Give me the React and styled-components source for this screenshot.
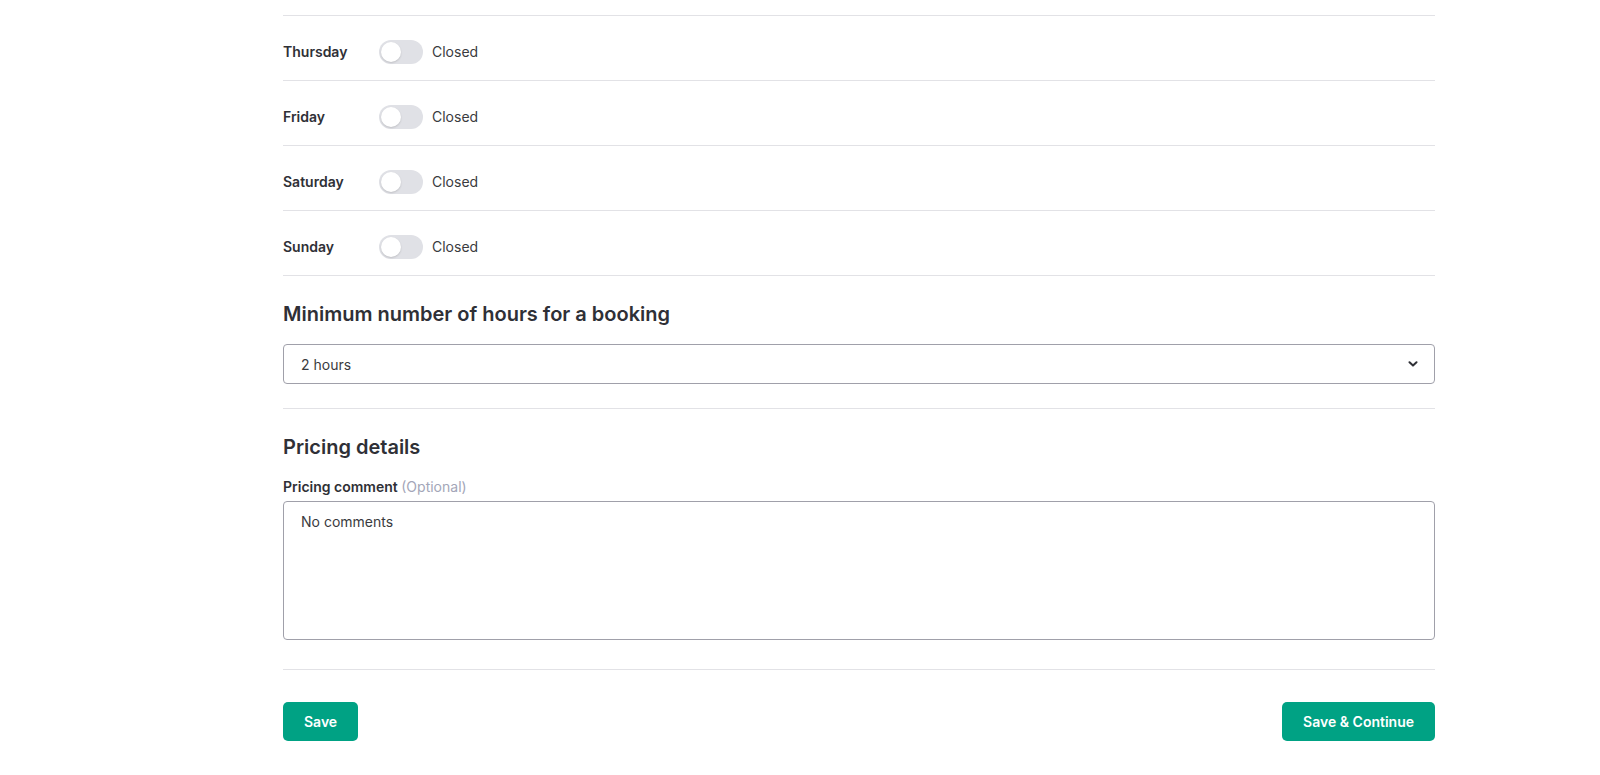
import React from 'react'
import styled, { createGlobalStyle } from 'styled-components'

const GlobalStyle = createGlobalStyle`
  body {
    margin: 0;
    background: #ffffff;
    font-family: Inter, "Noto Sans", "Liberation Sans", sans-serif;
    color: #2f3036;
  }
`

const Page = styled.div`
  padding: 15px 0 40px 283px;
`

const Form = styled.div`
  width: 1152px;
`

const DayRow = styled.div`
  display: flex;
  align-items: center;
  border-top: 1px solid #e2e2e6;
  padding: 24px 0 16px;
`

const DayLabel = styled.div`
  width: 96px;
  font-size: 14px;
  font-weight: 600;
  line-height: 20px;
  color: #2f3036;
`

const Track = styled.span`
  position: relative;
  display: inline-block;
  width: 44px;
  height: 24px;
  border-radius: 12px;
  background: ${(props) => (props.on ? '#00a284' : '#e0e1e6')};

  &:after {
    content: '';
    position: absolute;
    top: 2px;
    left: ${(props) => (props.on ? '22px' : '2px')};
    width: 20px;
    height: 20px;
    border-radius: 50%;
    background: #ffffff;
    box-shadow: 0 1px 2px rgba(0, 0, 0, 0.15);
  }
`

const ToggleText = styled.span`
  margin-left: 9px;
  font-size: 14px;
  line-height: 20px;
  color: #3a3b40;
`

const Section = styled.div`
  border-top: 1px solid #e2e2e6;
  padding-top: 24px;
`

const Heading = styled.h2`
  margin: 0;
  font-size: 20px;
  font-weight: 600;
  line-height: 28px;
  color: #2f3036;
`

const SelectBox = styled.div`
  margin: 16px 0 24px;
  height: 40px;
  box-sizing: border-box;
  border: 1px solid #a0a0aa;
  border-radius: 4px;
  display: flex;
  align-items: center;
  justify-content: space-between;
  padding: 0 16px 0 17px;
  font-size: 14px;
  color: #3a3b40;
`

const FieldLabel = styled.div`
  margin-top: 16px;
  font-size: 14px;
  line-height: 20px;
  font-weight: 600;
  color: #2f3036;
`

const Optional = styled.span`
  font-weight: 400;
  color: #a3a6b8;
`

const TextArea = styled.div`
  margin: 4px 0 29px;
  height: 139px;
  box-sizing: border-box;
  border: 1px solid #a0a0aa;
  border-radius: 4px;
  padding: 10px 17px;
  font-size: 14px;
  line-height: 20px;
  color: #3a3b40;
`

const Footer = styled.div`
  border-top: 1px solid #e2e2e6;
  padding-top: 32px;
  display: flex;
  justify-content: space-between;
`

const Button = styled.button`
  height: 39px;
  padding: 0 21px;
  border: none;
  border-radius: 5px;
  background: #00a284;
  color: #ffffff;
  font-family: inherit;
  font-size: 14px;
  font-weight: 600;
  cursor: pointer;
`

const days = ['Thursday', 'Friday', 'Saturday', 'Sunday']

const Chevron = () => (
  <svg width="10" height="6" viewBox="0 0 10 6" fill="none">
    <path d="M1.5 1.3 L5 4.6 L8.5 1.3" stroke="#2f3036" strokeWidth="2" strokeLinecap="round" strokeLinejoin="round" />
  </svg>
)

const App = () => {
  return (
    <>
      <GlobalStyle />
      <Page>
        <Form>
          {days.map((day) => (
            <DayRow key={day}>
              <DayLabel>{day}</DayLabel>
              <Track />
              <ToggleText>Closed</ToggleText>
            </DayRow>
          ))}

          <Section>
            <Heading>Minimum number of hours for a booking</Heading>
            <SelectBox>
              <span>2 hours</span>
              <Chevron />
            </SelectBox>
          </Section>

          <Section>
            <Heading>Pricing details</Heading>
            <FieldLabel>
              Pricing comment <Optional>(Optional)</Optional>
            </FieldLabel>
            <TextArea>No comments</TextArea>
          </Section>

          <Footer>
            <Button>Save</Button>
            <Button>Save &amp; Continue</Button>
          </Footer>
        </Form>
      </Page>
    </>
  )
}

export default App
